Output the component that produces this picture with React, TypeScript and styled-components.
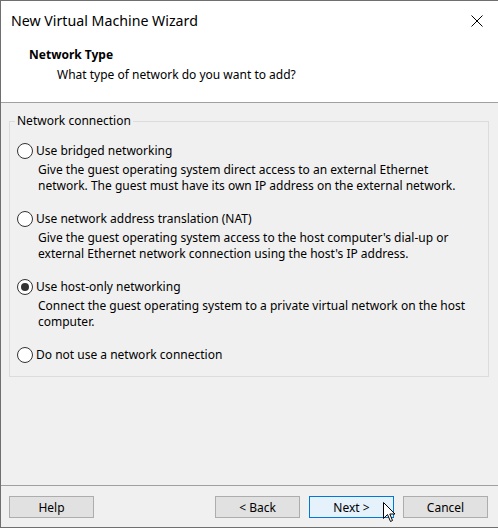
import React from 'react';
import styled, { createGlobalStyle } from 'styled-components';

const FONT = '"Noto Sans", "Open Sans", Arial, sans-serif';

const GlobalStyle = createGlobalStyle`
  html, body {
    margin: 0;
    padding: 0;
    background: #ffffff;
  }
  * {
    box-sizing: border-box;
  }
`;

const Window = styled.div`
  position: relative;
  width: 498px;
  height: 528px;
  display: flex;
  flex-direction: column;
  border-left: 1px solid #6f6f6f;
  border-top: 1px solid #6f6f6f;
  border-bottom: 1px solid #6f6f6f;
  font-family: ${FONT};
  font-size: 12px;
  color: #000;
  background: #f0f0f0;
  overflow: hidden;
`;

const TitleBar = styled.div`
  height: 37px;
  display: flex;
  align-items: center;
  justify-content: space-between;
  background: #fff;
  padding: 0 14px 0 10px;
`;

const Title = styled.div`
  font-size: 14.2px;
  padding-top: 1px;
  color: #000;
`;

const CloseButton = styled.div`
  width: 14px;
  height: 14px;
  display: flex;
  align-items: center;
  justify-content: center;
  margin-top: 2px;
`;

const Header = styled.div`
  height: 65px;
  background: #fff;
  padding: 9px 0 0 28px;
  border-bottom: 1px solid #a0a0a0;
`;

const HeaderTitle = styled.div`
  font-weight: 700;
  line-height: 16px;
`;

const HeaderSubtitle = styled.div`
  line-height: 16px;
  margin-top: 4px;
  padding-left: 28px;
`;

const Body = styled.div`
  flex: 1;
  padding: 10px 9px 0 8px;
`;

const GroupBox = styled.fieldset`
  margin: 0;
  border: 1px solid #dcdcdc;
  padding: 14px 8px 13px 5px;
  min-width: 0;
`;

const Legend = styled.legend`
  padding: 0 2px;
  line-height: 16px;
`;

const OptionList = styled.div`
  display: flex;
  flex-direction: column;
  gap: 17px;
  padding-left: 2px;
`;

const Option = styled.div`
  display: flex;
  flex-direction: column;
  gap: 3px;
`;

const OptionRow = styled.label`
  display: flex;
  align-items: center;
  gap: 3px;
  line-height: 16px;
  height: 16px;
`;

const RadioCircle = styled.span<{ checked?: boolean }>`
  width: 16px;
  height: 16px;
  border-radius: 50%;
  border: 1px solid #333;
  background: #fff;
  display: flex;
  align-items: center;
  justify-content: center;

  &::after {
    content: '';
    width: 8px;
    height: 8px;
    border-radius: 50%;
    background: ${(props) => (props.checked ? '#333' : 'transparent')};
  }
`;

const Description = styled.div`
  padding-left: 21px;
  line-height: 16px;
  padding-right: 10px;
`;

const Footer = styled.div`
  position: relative;
  height: 42px;
  border-top: 1px solid #a0a0a0;
  display: flex;
  align-items: flex-start;
  padding: 10px 10px 0 8px;
  gap: 9px;
`;

const Spacer = styled.div`
  flex: 1;
`;

const Button = styled.div<{ focused?: boolean }>`
  width: 85px;
  height: 22px;
  display: flex;
  align-items: center;
  justify-content: center;
  background: ${(props) => (props.focused ? '#e5f1fb' : '#e1e1e1')};
  border: 1px solid ${(props) => (props.focused ? '#0078d7' : '#adadad')};
  font-size: 12px;
`;

const Cursor = styled.svg`
  position: absolute;
  left: 382px;
  top: 16px;
`;

const options = [
  {
    label: 'Use bridged networking',
    description:
      'Give the guest operating system direct access to an external Ethernet network. The guest must have its own IP address on the external network.',
  },
  {
    label: 'Use network address translation (NAT)',
    description:
      "Give the guest operating system access to the host computer's dial-up or external Ethernet network connection using the host's IP address.",
  },
  {
    label: 'Use host-only networking',
    description: 'Connect the guest operating system to a private virtual network on the host computer.',
    checked: true,
  },
  {
    label: 'Do not use a network connection',
  },
];

const App = () => (
  <>
    <GlobalStyle />
    <Window>
      <TitleBar>
        <Title>New Virtual Machine Wizard</Title>
        <CloseButton>
          <svg width="12" height="12" viewBox="0 0 12 12">
            <path d="M0.5 0.5 L11.5 11.5 M11.5 0.5 L0.5 11.5" stroke="#000" strokeWidth="1" />
          </svg>
        </CloseButton>
      </TitleBar>
      <Header>
        <HeaderTitle>Network Type</HeaderTitle>
        <HeaderSubtitle>What type of network do you want to add?</HeaderSubtitle>
      </Header>
      <Body>
        <GroupBox>
          <Legend>Network connection</Legend>
          <OptionList>
            {options.map((option) => (
              <Option key={option.label}>
                <OptionRow>
                  <RadioCircle checked={option.checked} />
                  {option.label}
                </OptionRow>
                {option.description && <Description>{option.description}</Description>}
              </Option>
            ))}
          </OptionList>
        </GroupBox>
      </Body>
      <Footer>
        <Button>Help</Button>
        <Spacer />
        <Button>&lt; Back</Button>
        <Button focused>Next &gt;</Button>
        <Button>Cancel</Button>
        <Cursor width="13" height="21" viewBox="0 0 13 21">
          <path
            d="M0.5 0.5 L0.5 16.5 L4.5 12.5 L7.5 19.5 L9.5 18.5 L6.8 12 L12 12 Z"
            fill="#fff"
            stroke="#000"
            strokeWidth="1"
            strokeLinejoin="miter"
          />
        </Cursor>
      </Footer>
    </Window>
  </>
);

export default App;
